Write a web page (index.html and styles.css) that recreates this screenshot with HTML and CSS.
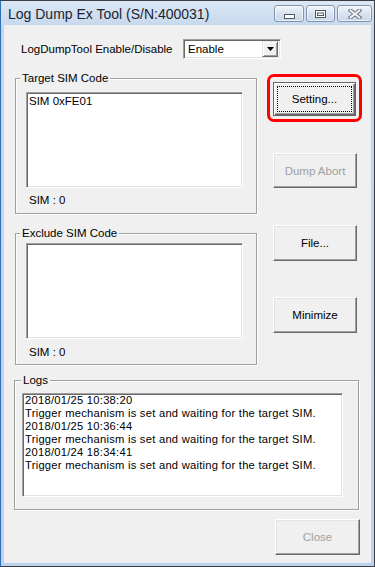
FILE: index.html
```html
<!DOCTYPE html>
<html lang="en">
<head>
    <meta charset="UTF-8">
    <meta name="viewport" content="width=device-width, initial-scale=1.0">
    <title>Log Dump Ex Tool</title>
    <link rel="stylesheet" href="styles.css">
</head>
<body>
<div class="window">
    <div class="titlebar">
        <span class="title">Log Dump Ex Tool (S/N:400031)</span>
        <div class="caption-buttons">
            <span class="cap-btn cap-min">
                <svg width="11" height="5" viewBox="0 0 11 5"><rect x="0.5" y="0.5" width="10" height="4" fill="#fff" stroke="#4e5866"/></svg>
            </span>
            <span class="cap-btn cap-max">
                <svg width="11" height="8" viewBox="0 0 11 8"><rect x="0.5" y="0.5" width="10" height="7" fill="#fff" stroke="#4e5866"/><rect x="2.5" y="3" width="6" height="2.5" fill="#fff" stroke="#4e5866"/></svg>
            </span>
            <span class="cap-btn cap-close">
                <svg width="14" height="10" viewBox="0 0 14 10"><path d="M2.5 1.5 L11.5 8.5 M11.5 1.5 L2.5 8.5" stroke="#6b737c" stroke-width="4" stroke-linecap="square"/><path d="M2.5 1.5 L11.5 8.5 M11.5 1.5 L2.5 8.5" stroke="#eef2f7" stroke-width="2" stroke-linecap="square"/></svg>
            </span>
        </div>
    </div>
    <div class="client">
        <div class="top-row">
            <span class="label">LogDumpTool Enable/Disable</span>
            <div class="combo">
                <span class="combo-text">Enable</span>
                <span class="combo-arrow">
                    <svg width="7" height="4" viewBox="0 0 7 4"><path d="M0 0 H7 L3.5 4 Z" fill="#000"/></svg>
                </span>
            </div>
        </div>
        <div class="main">
            <div class="groups">
                <div class="group group-target">
                    <div class="legend">Target SIM Code</div>
                    <div class="listbox list-target">
                        <div class="item">SIM 0xFE01</div>
                    </div>
                    <div class="count count-target">SIM : 0</div>
                </div>
                <div class="group group-exclude">
                    <div class="legend">Exclude SIM Code</div>
                    <div class="listbox list-exclude"></div>
                    <div class="count count-exclude">SIM : 0</div>
                </div>
            </div>
            <div class="actions">
                <div class="highlight">
                    <button class="btn btn-default"><span class="focus">Setting...</span></button>
                </div>
                <button class="btn btn-abort" disabled>Dump Abort</button>
                <button class="btn btn-file">File...</button>
                <button class="btn btn-minimize">Minimize</button>
            </div>
        </div>
        <div class="group group-logs">
            <div class="legend">Logs</div>
            <div class="logbox">
                <div>2018/01/25 10:38:20</div>
                <div>Trigger mechanism is set and waiting for the target SIM.</div>
                <div>2018/01/25 10:36:44</div>
                <div>Trigger mechanism is set and waiting for the target SIM.</div>
                <div>2018/01/24 18:34:41</div>
                <div>Trigger mechanism is set and waiting for the target SIM.</div>
            </div>
        </div>
        <div class="footer">
            <button class="btn btn-close" disabled>Close</button>
        </div>
    </div>
</div>
</body>
</html>
```

FILE: styles.css
```css
body {
    margin: 0;
    padding: 0;
    font-family: "Liberation Sans", Arial, sans-serif;
    font-size: 11.5px;
    color: #000;
    background-color: #fff;
}
.window {
    width: 375px;
    height: 567px;
    box-sizing: border-box;
    border: 1px solid #3a3f47;
    border-left-color: #2f6fb8;
    background: linear-gradient(#dbe7f4, #c3d6ec 30px, #bed3eb);
    display: flex;
    flex-direction: column;
}
.titlebar {
    height: 24px;
    display: flex;
    align-items: flex-start;
    padding-left: 7px;
    padding-right: 2px;
}
.title {
    font-size: 14px;
    line-height: 16px;
    margin-top: 5px;
    color: #1c2430;
    flex: 1;
}
.caption-buttons {
    display: flex;
    gap: 2px;
    margin-top: 4px;
}
.cap-btn {
    width: 30px;
    height: 17px;
    box-sizing: border-box;
    border: 1px solid #8193ad;
    border-radius: 3px;
    background: linear-gradient(#f1f5fa, #d8e3ef 50%, #c8d7e9);
    box-shadow: inset 0 0 0 1px rgba(255, 255, 255, 0.6);
    display: flex;
    justify-content: center;
}
.cap-min {
    align-items: flex-end;
    padding-bottom: 2px;
}
.cap-max {
    width: 29px;
    align-items: center;
}
.cap-close {
    width: 35px;
    align-items: center;
}
.client {
    flex: 1;
    margin: 0 3px 3px 3px;
    background-color: #f0f0f0;
    border-bottom: 1px solid #e4edf6;
}
.top-row {
    display: flex;
    align-items: center;
    padding-top: 14px;
    padding-left: 17px;
}
.label {
    width: 162px;
}
.combo {
    width: 98px;
    height: 20px;
    box-sizing: border-box;
    background-color: #fff;
    border: 1px solid;
    border-color: #a0a0a0 #fff #fff #a0a0a0;
    box-shadow: inset 1px 1px 0 #696969, inset -1px -1px 0 #e3e3e3;
    display: flex;
    align-items: center;
    padding: 2px 2px 2px 4px;
}
.combo-text {
    flex: 1;
}
.combo-arrow {
    width: 16px;
    height: 16px;
    box-sizing: border-box;
    background-color: #f0f0f0;
    border: 1px solid;
    border-color: #e3e3e3 #696969 #696969 #e3e3e3;
    box-shadow: inset 1px 1px 0 #fff, inset -1px -1px 0 #a0a0a0;
    display: flex;
    align-items: center;
    justify-content: center;
}
.main {
    display: flex;
    align-items: flex-start;
    margin-top: 15px;
    padding-left: 11px;
}
.groups {
    width: 242px;
    margin-top: 4px;
}
.group {
    box-sizing: border-box;
    border: 1px solid #a0a0a0;
    box-shadow: inset 1px 1px 0 #fff, 1px 1px 0 #fff;
}
.legend {
    width: fit-content;
    line-height: 14px;
    margin: -8px 0 0 4px;
    padding: 0 2px;
    background-color: #f0f0f0;
}
.group-target {
    height: 136px;
}
.group-exclude {
    height: 132px;
    margin-top: 19px;
}
.listbox {
    width: 217px;
    height: 96px;
    box-sizing: border-box;
    margin-left: 10px;
    background-color: #fff;
    border: 1px solid;
    border-color: #a0a0a0 #fff #fff #a0a0a0;
    box-shadow: inset 1px 1px 0 #696969, inset -1px -1px 0 #e3e3e3;
    padding: 2px 2px;
}
.list-target {
    margin-top: 7px;
}
.list-exclude {
    margin-top: 3px;
}
.item {
    line-height: 13px;
}
.count {
    line-height: 14px;
    margin-left: 13px;
}
.count-target {
    margin-top: 5px;
}
.count-exclude {
    margin-top: 6px;
}
.actions {
    width: 95px;
    margin-left: 10px;
    display: flex;
    flex-direction: column;
    align-items: flex-start;
}
.highlight {
    width: 95px;
    height: 48px;
    box-sizing: border-box;
    border: 3px solid #f00;
    border-radius: 7px;
    padding: 5px 3px 3px 3px;
}
.btn {
    width: 84px;
    height: 36px;
    box-sizing: border-box;
    margin: 0 0 0 6px;
    padding: 0;
    font-family: "Liberation Sans", Arial, sans-serif;
    font-size: 11.5px;
    color: #000;
    background-color: #f0f0f0;
    border: 1px solid;
    border-color: #fff #696969 #696969 #fff;
    box-shadow: inset -1px -1px 0 #a0a0a0, inset 1px 1px 0 #e3e3e3;
}
.btn:disabled {
    color: #a0a0a0;
}
.btn-default {
    width: 83px;
    height: 34px;
    margin: 0;
    border: 1px solid #646464;
    box-shadow: inset 1px 1px 0 #fff, inset -1px -1px 0 #696969, inset -2px -2px 0 #a0a0a0;
    padding: 3px;
}
.focus {
    display: flex;
    align-items: center;
    justify-content: center;
    height: 100%;
    box-sizing: border-box;
    border: 1px dotted #000;
}
.btn-abort {
    height: 35px;
    margin-top: 31px;
}
.btn-file {
    margin-top: 37px;
}
.btn-minimize {
    margin-top: 36px;
}
.group-logs {
    width: 345px;
    height: 130px;
    margin: 15px 0 0 10px;
}
.group-logs .legend {
    margin-left: 6px;
}
.logbox {
    width: 321px;
    height: 104px;
    box-sizing: border-box;
    margin: 6px 0 0 7px;
    background-color: #fff;
    border: 1px solid;
    border-color: #a0a0a0 #fff #fff #a0a0a0;
    box-shadow: inset 1px 1px 0 #696969, inset -1px -1px 0 #e3e3e3;
    padding: 0 2px;
    font-size: 11.2px;
    line-height: 12.9px;
    letter-spacing: 0.25px;
}
.footer {
    display: flex;
    justify-content: flex-end;
    margin-top: 9px;
    padding-right: 11px;
}
.btn-close {
    width: 85px;
    margin: 0;
}
```
